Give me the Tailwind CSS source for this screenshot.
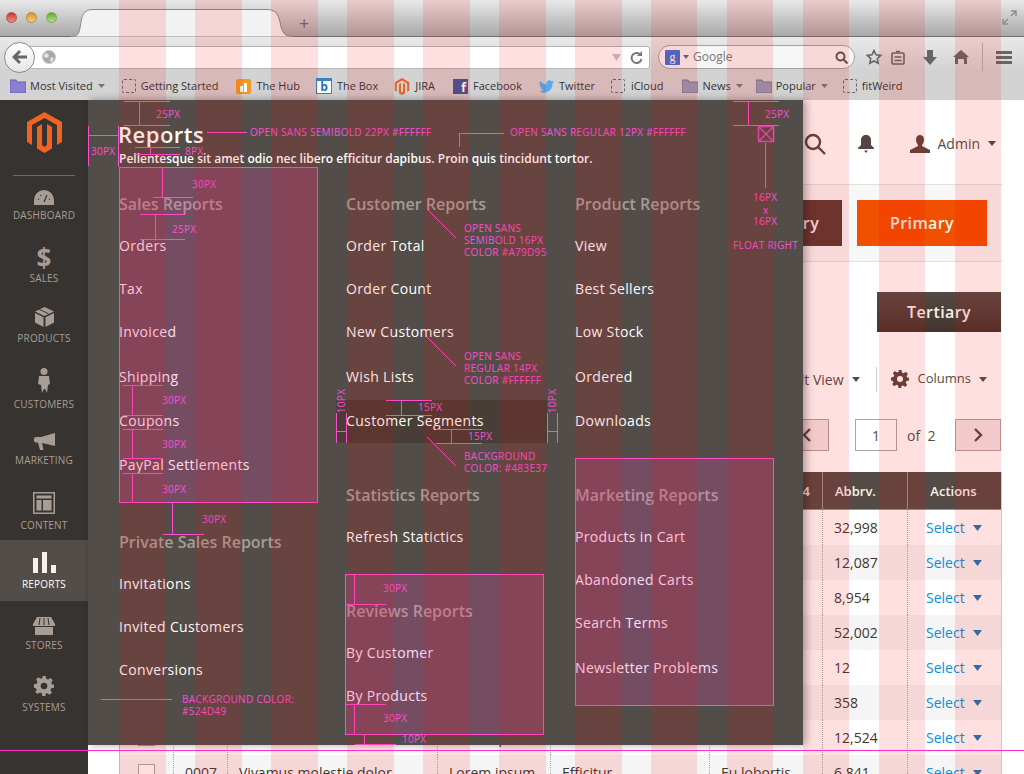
<!DOCTYPE html>
<html lang="en">
<head>
  <meta charset="UTF-8">
  <title>Reports menu spec</title>
  <script src="https://cdn.jsdelivr.net/npm/@tailwindcss/browser@4"></script>
</head>
<body class="relative w-[1024px] h-[774px] overflow-hidden bg-white font-['Open_Sans',sans-serif] text-[#41362f]">

  <!-- browser chrome -->
  <div class="h-[100px] flex flex-col">
    <div class="h-[37px] flex bg-linear-to-b from-[#e9e9e9] to-[#a9a9a9] border-b border-[#6f6f6f] pl-[6px]">
      <div class="flex gap-[9px] pt-[12px]">
        <span class="size-[11px] rounded-full bg-linear-to-b from-[#c9352f] to-[#f08a80] border border-[#a55]"></span>
        <span class="size-[11px] rounded-full bg-linear-to-b from-[#d8921f] to-[#f8d070] border border-[#a85]"></span>
        <span class="size-[11px] rounded-full bg-linear-to-b from-[#62a82f] to-[#b8e08a] border border-[#7a5]"></span>
      </div>
      <svg class="ml-[13px] mt-[8px]" width="224" height="29" viewBox="0 0 224 29"><path d="M0 28.5C9 28.5 9 26 11 14C12.500 5 15 1.500 24 1.500H196C205 1.500 208 5 210 14C212 26 215 28.500 224 28.500V29H0Z" fill="#f2f2f2" stroke="#8a8a8a"/></svg>
      <span class="ml-[5px] mt-[11px] text-[18px] leading-[24px] text-[#6a6a6a]">+</span>
      <svg class="ml-auto mr-[7px] mt-[10px]" width="15" height="15" viewBox="0 0 15 15" fill="none" stroke="#8f8f8f" stroke-width="1.500"><path d="M9 1h5v5M14 1L9 6M1 9v5h5M1 14l5-5"/></svg>
    </div>
    <div class="h-[35px] flex items-center bg-linear-to-b from-[#e9e9e9] to-[#d2d2d2] pl-[4px] pt-[5px]">
      <div class="z-10 size-[31px] rounded-full bg-linear-to-b from-white to-[#e6e6e6] border border-[#8a8a8a] flex items-center justify-center">
        <svg width="16" height="14" viewBox="0 0 16 14" fill="#666"><path d="M7 0L0 7l7 7 2-2-3.500-3.500H15V5.500H5.500L9 2z"/></svg>
      </div>
      <div class="-ml-[5px] w-[620px] h-[23px] bg-white border border-[#b5b5b5] rounded-r-[3px] flex items-center pl-[11px] pr-[5px]">
        <svg width="14" height="14" viewBox="0 0 14 14"><circle cx="7" cy="7" r="6.500" fill="#a8a8a8" stroke="#c9c9c9"/><path d="M3 3l3 1 1 2-2 2-3-1zM9 7l3 1-2 4-2-1z" fill="#e4e4e4"/></svg>
        <svg class="ml-auto" width="9" height="7" viewBox="0 0 9 7" fill="#c4c4c4"><path d="M0 0h9L4.500 7z"/></svg>
        <svg class="ml-[9px] mr-[1px]" width="13" height="13" viewBox="0 0 13 13" fill="none" stroke="#777" stroke-width="2"><path d="M11 4.500A5 5 0 1 0 11.500 8"/><path d="M12 0v5H7" fill="#777" stroke="none"/></svg>
      </div>
      <div class="ml-[8px] w-[197px] h-[24px] bg-[#f6f6f6] border border-[#a0a0a0] rounded-full flex items-center pl-[6px] pr-[6px]">
        <span class="w-[15px] h-[15px] bg-[#3f6fd8] rounded-[1px] text-white text-[12px] leading-[15px] text-center font-['Liberation_Serif',serif]">g</span>
        <svg class="ml-[3px]" width="6" height="4" viewBox="0 0 6 4" fill="#666"><path d="M0 0h6L3 4z"/></svg>
        <span class="ml-[4px] text-[12px] text-[#777]">Google</span>
        <svg class="ml-auto" width="13" height="13" viewBox="0 0 13 13" fill="none" stroke="#555" stroke-width="2"><circle cx="5.500" cy="5.500" r="4"/><path d="M8.500 8.500L12.500 12.500"/></svg>
      </div>
      <svg class="ml-[11px]" width="16" height="16" viewBox="0 0 16 16" fill="none" stroke="#666" stroke-width="1.600"><path d="M8 1.500l2 4.300 4.700.6-3.400 3.200.9 4.700L8 12l-4.200 2.300.9-4.700L1.300 6.400 6 5.800z"/></svg>
      <svg class="ml-[9px]" width="14" height="15" viewBox="0 0 14 15" fill="none" stroke="#666" stroke-width="1.600"><rect x="1" y="3" width="12" height="11" rx="1"/><path d="M5 1.500h4M3.500 7h7M3.500 10.500h7"/></svg>
      <svg class="ml-[18px]" width="14" height="15" viewBox="0 0 14 15" fill="#666"><path d="M4 0h6v7h4l-7 8-7-8h4z"/></svg>
      <svg class="ml-[16px]" width="16" height="14" viewBox="0 0 16 14" fill="#666"><path d="M8 0l8 7h-2v7h-3V9H5v5H2V7H0z"/></svg>
      <span class="ml-[13px] w-px h-[28px] bg-[#b0b0b0]"></span>
      <span class="ml-[13px] w-[16px] flex flex-col gap-[2px]"><i class="h-[3px] bg-[#666]"></i><i class="h-[3px] bg-[#666]"></i><i class="h-[3px] bg-[#666]"></i></span>
    </div>
    <div class="flex-1 flex items-center bg-[#d3d3d3] pl-[10px] text-[11px] text-[#333]">
      <svg width="16" height="14" viewBox="0 0 16 14"><path d="M0 1h6l1 2h9v11H0z" fill="#8a7ed0" stroke="#6a5eb0"/></svg>
      <span class="ml-[4px]">Most Visited</span>
      <svg class="ml-[5px]" width="7" height="4" viewBox="0 0 7 4" fill="#777"><path d="M0 0h7L3.500 4z"/></svg>
      <span class="ml-[17px] size-[14px] rounded-[2px] border border-dashed border-[#666]"></span>
      <span class="ml-[5px]">Getting Started</span>
      <span class="ml-[18px] size-[15px] rounded-[2px] bg-[#f29a1f] flex items-end justify-center gap-px pb-[2px]"><i class="w-[3px] h-[6px] bg-white"></i><i class="w-[3px] h-[9px] bg-white"></i></span>
      <span class="ml-[5px]">The Hub</span>
      <span class="ml-[16px] w-[16px] h-[16px] bg-white border border-[#3b7fc4] border-t-[3px] text-[#1e6fb8] text-[12px] leading-[12px] font-bold text-center">b</span>
      <span class="ml-[5px]">The Box</span>
      <svg class="ml-[16px]" width="16" height="17" viewBox="0 0 35 41" fill="#e8622a"><path d="M17.500 0L35 10V30L30 33V13L17.500 6 5 13V33L0 30V10z"/><path d="M10 15L15 12V33L17.500 35 20 33V12L25 15V36.500L17.500 41 10 36.500z"/></svg>
      <span class="ml-[5px]">JIRA</span>
      <span class="ml-[18px] size-[15px] bg-[#3b5998] text-white text-[13px] leading-[16px] font-bold text-right pr-[2px]">f</span>
      <span class="ml-[5px]">Facebook</span>
      <svg class="ml-[17px]" width="15" height="13" viewBox="0 0 16 13" fill="#55acee"><path d="M16 1.500c-.6.300-1.200.4-1.900.5.700-.4 1.200-1 1.400-1.800-.6.400-1.300.7-2.100.8A3.300 3.300 0 0 0 7.800 4C5.100 3.900 2.700 2.600 1.100.6.200 2.100.700 4 2.100 4.900c-.5 0-1-.2-1.500-.4 0 1.600 1.100 2.900 2.600 3.200-.5.100-1 .2-1.500.1.400 1.300 1.600 2.200 3.100 2.300A6.600 6.600 0 0 1 0 11.500 9.300 9.300 0 0 0 14.400 3.300c.6-.5 1.200-1.100 1.600-1.800z"/></svg>
      <span class="ml-[5px]">Twitter</span>
      <span class="ml-[16px] size-[14px] rounded-[2px] border border-dashed border-[#666]"></span>
      <span class="ml-[6px]">iCloud</span>
      <svg class="ml-[19px]" width="16" height="14" viewBox="0 0 16 14"><path d="M0 1h6l1 2h9v11H0z" fill="#8f9db8" stroke="#6a7890"/></svg>
      <span class="ml-[4px]">News</span>
      <svg class="ml-[5px]" width="7" height="4" viewBox="0 0 7 4" fill="#777"><path d="M0 0h7L3.500 4z"/></svg>
      <svg class="ml-[13px]" width="16" height="14" viewBox="0 0 16 14"><path d="M0 1h6l1 2h9v11H0z" fill="#8f9db8" stroke="#6a7890"/></svg>
      <span class="ml-[4px]">Popular</span>
      <svg class="ml-[5px]" width="7" height="4" viewBox="0 0 7 4" fill="#777"><path d="M0 0h7L3.500 4z"/></svg>
      <span class="ml-[15px] size-[14px] rounded-[2px] border border-dashed border-[#666]"></span>
      <span class="ml-[5px]">fitWeird</span>
    </div>
  </div>

  <div class="flex h-[674px]">
    <!-- sidebar -->
    <nav class="w-[88px] shrink-0 bg-[#373330] text-[#a79d95] text-[10px] leading-[14px] tracking-[0.2px] flex flex-col">
      <div class="h-[75px] border-b-0 relative flex justify-center pt-[12px]">
        <svg width="35" height="41" viewBox="0 0 35 41" fill="#f26322"><path d="M17.500 0L35 10V30L30 33V13L17.500 6 5 13V33L0 30V10z"/><path d="M10 15L15 12V33L17.500 35 20 33V12L25 15V36.500L17.500 41 10 36.500z"/></svg>
      </div>
      <div class="mx-[13px] h-px bg-[#6f6962]"></div>
      <a class="h-[56px] flex flex-col items-center justify-end gap-[3px] pb-[10px]">
        <svg width="20" height="15" viewBox="0 0 20 15"><path d="M0 15V10a10 10 0 0 1 20 0v5z" fill="#a79d95"/><path d="M10 12l3-7M4 9l1 .5M6.500 5l.5 1M16 9l-1 .5" stroke="#373330" stroke-width="1.200"/></svg>
        <span>DASHBOARD</span>
      </a>
      <a class="h-[63px] flex flex-col items-center justify-end gap-[2px] pb-[10px]">
        <span class="text-[26px] leading-[21px] font-bold">$</span>
        <span>SALES</span>
      </a>
      <a class="h-[60px] flex flex-col items-center justify-end gap-[4px] pb-[10px]">
        <svg width="19" height="20" viewBox="0 0 19 20" fill="#a79d95"><path d="M9.500 0L19 4.500 9.500 9 0 4.500z"/><path d="M0 6l8.500 4.200V20L0 15.500zM19 6l-8.500 4.200V20l8.500-4.500z"/><path d="M4 2.200l9.500 4.500" stroke="#373330"/></svg>
        <span>PRODUCTS</span>
      </a>
      <a class="h-[66px] flex flex-col items-center justify-end gap-[4px] pb-[10px]">
        <svg width="12" height="25" viewBox="0 0 12 25" fill="#a79d95"><circle cx="6" cy="3.500" r="3.500"/><path d="M1 8h10l1 8-2 1-1 8-2-4-1 0-2 4-1-8-3-1z"/></svg>
        <span>CUSTOMERS</span>
      </a>
      <a class="h-[56px] flex flex-col items-center justify-end gap-[3px] pb-[10px]">
        <svg width="21" height="17" viewBox="0 0 21 17" fill="#a79d95"><path d="M21 0v13L8 10l1.500 7H6L4 9.500H2a2 2 0 0 1-2-2V6a2 2 0 0 1 2-2h5z"/></svg>
        <span>MARKETING</span>
      </a>
      <a class="h-[63px] flex flex-col items-center justify-end gap-[4px] pb-[8px]">
        <svg width="22" height="22" viewBox="0 0 22 22" fill="#a79d95"><path fill-rule="evenodd" d="M0 0h22v22H0zM1.500 1.500v19h19v-19z"/><path d="M3.500 3.500h15v3h-15zM3.500 8h5v10.500h-5zM10 8h8.500v10.500H10z"/></svg>
        <span>CONTENT</span>
      </a>
      <a class="h-[61px] bg-[#524d49] text-white flex flex-col items-center justify-end gap-[4px] pb-[10px]">
        <span class="flex items-end gap-[4px] h-[21px]"><i class="w-[5px] h-[15px] bg-[#f5f1ea]"></i><i class="w-[5px] h-[21px] bg-[#f5f1ea]"></i><i class="w-[5px] h-[8px] bg-[#f5f1ea]"></i></span>
        <span>REPORTS</span>
      </a>
      <a class="h-[61px] flex flex-col items-center justify-end gap-[3px] pb-[10px]">
        <svg width="22" height="18" viewBox="0 0 22 18" fill="#a79d95"><path d="M4 0h14l4 7v2H0V7zM2 10h18v8H2z"/><path d="M7 1L6 8M11 1v7M15 1l1 7" stroke="#373330"/></svg>
        <span>STORES</span>
      </a>
      <a class="h-[62px] flex flex-col items-center justify-end gap-[4px] pb-[10px]">
        <svg width="20" height="20" viewBox="0 0 24 24" fill="#a79d95"><path fill-rule="evenodd" d="M10 0h4l.6 3.300 2.400 1 2.800-1.900 2.800 2.800L20.700 8l1 2.400L24 10v4l-3.300.6-1 2.400 1.900 2.800-2.800 2.800-2.800-1.900-2.400 1L14 24h-4l-.6-3.300-2.400-1-2.800 1.900-2.800-2.800L3.300 17l-1-2.400L0 14v-4l3.300-.6 1-2.400L2.400 4.200l2.800-2.800L8 3.300l2.400-1zM12 8a4 4 0 1 0 0 8 4 4 0 0 0 0-8z"/></svg>
        <span>SYSTEMS</span>
      </a>
    </nav>

    <!-- page under the flyout -->
    <main class="w-[914px] shrink-0 flex flex-col">
      <header class="h-[85px] shrink-0 border-b border-[#e6dedb] flex items-center justify-end pt-[3px] pr-[6px] text-[14px] text-[#524d49]">
        <svg width="22" height="22" viewBox="0 0 22 22" fill="none" stroke="#5a4640" stroke-width="2.400"><circle cx="9" cy="9" r="7"/><path d="M14 14l7 7"/></svg>
        <svg class="ml-[32px]" width="16" height="18" viewBox="0 0 16 18" fill="#524642"><path d="M8 0c3 0 5 2 5 5v5l3 3v1H0v-1l3-3V5c0-3 2-5 5-5zM6 15.500h4L8 18z"/></svg>
        <svg class="ml-[36px]" width="20" height="18" viewBox="0 0 20 18" fill="#5a4640"><path d="M10 0c2.500 0 4 2 4 4.500S13 9 12 10v1l8 4v3H0v-3l8-4v-1C7 9 6 7 6 4.500S7.500 0 10 0z"/></svg>
        <span class="ml-[8px]">Admin</span>
        <svg class="ml-[8px]" width="8" height="5" viewBox="0 0 8 5" fill="#5a4640"><path d="M0 0h8L4 5z"/></svg>
      </header>
      <div class="h-[77px] shrink-0 bg-[#f7f7f7] border-b border-[#e6dedb] flex items-center justify-end gap-[15px] pr-[15px] text-[16px] font-semibold tracking-[0.4px] text-[#f5f1ea]">
        <button class="h-[46px] w-[130px] bg-[#5a3a33]">Secondary</button>
        <button class="h-[46px] w-[130px] bg-[#f05000]">Primary</button>
      </div>
      <div class="h-[210px] shrink-0 flex flex-col items-end pr-[1px]">
        <button class="mt-[30px] w-[124px] h-[40px] bg-linear-to-b from-[#534b47] to-[#43352d] text-[16px] font-semibold tracking-[0.4px] text-[#f5f1ea]">Tertiary</button>
        <div class="mt-[34px] h-[26px] flex items-center text-[#524d49] pr-[14px]">
          <span class="text-[14px]">Default View</span>
          <svg class="ml-[8px]" width="8" height="5" viewBox="0 0 8 5" fill="#524d49"><path d="M0 0h8L4 5z"/></svg>
          <span class="ml-[16px] w-px h-[25px] bg-[#ccc]"></span>
          <svg class="ml-[14px]" width="18" height="18" viewBox="0 0 24 24" fill="#5a4640"><path fill-rule="evenodd" d="M10 0h4l.6 3.300 2.400 1 2.800-1.900 2.800 2.800L20.700 8l1 2.400L24 10v4l-3.300.6-1 2.400 1.900 2.800-2.800 2.800-2.800-1.900-2.400 1L14 24h-4l-.6-3.300-2.400-1-2.800 1.900-2.800-2.800L3.300 17l-1-2.400L0 14v-4l3.300-.6 1-2.400L2.400 4.200l2.800-2.800L8 3.300l2.400-1zM12 8a4 4 0 1 0 0 8 4 4 0 0 0 0-8z"/></svg>
          <span class="ml-[9px] text-[13px]">Columns</span>
          <svg class="ml-[8px]" width="8" height="5" viewBox="0 0 8 5" fill="#524d49"><path d="M0 0h8L4 5z"/></svg>
        </div>
        <div class="mt-[27px] h-[32px] flex items-center text-[14px] text-[#524d49]">
          <button class="w-[46px] h-[32px] bg-[#f0e6e6] border border-[#b0a09c] flex items-center justify-center"><svg width="9" height="14" viewBox="0 0 9 14" fill="none" stroke="#5a4640" stroke-width="2.400"><path d="M8 1L2 7l6 6"/></svg></button>
          <input value="1" class="ml-[26px] w-[42px] h-[32px] bg-white border border-[#ada5a0] text-center text-[14px]">
          <span class="ml-[10px] w-[48px]">of&nbsp; 2</span>
          <button class="w-[46px] h-[32px] bg-[#f0e6e6] border border-[#b0a09c] flex items-center justify-center"><svg width="9" height="14" viewBox="0 0 9 14" fill="none" stroke="#5a4640" stroke-width="2.400"><path d="M1 1l6 6-6 6"/></svg></button>
        </div>
      </div>
      <div class="ml-[31px] w-[883px] border-x border-[#cfc8c4]">
        <div class="grid grid-cols-[53px_54px_210px_113px_159px_113px_85px_1fr] h-[38px] bg-[#544b46] text-[#f5f1ea] text-[13px] font-semibold leading-[38px] border-b border-[#a08f85]">
          <span></span><span></span><span></span><span></span><span></span>
          <span class="text-right pr-[12px]">Header 4</span>
          <span class="border-l border-[#a08f85] pl-[12px]">Abbrv.</span>
          <span class="border-l border-[#a08f85] text-center pr-[2px]">Actions</span>
        </div>
        <div id="rows"></div>
      </div>
    </main>
  </div>

  <!-- reports flyout -->
  <section class="absolute z-10 left-[88px] top-[100px] w-[715px] h-[645px] bg-[#524d49] shadow-[3px_0_8px_rgba(0,0,0,0.35)] pl-[31px] pt-[19px] text-white">
    <h1 class="text-[22px] leading-[30px] font-semibold tracking-[0.5px] -ml-[1px]">Reports</h1>
    <p class="mt-[2px] text-[12px] leading-[16px] font-semibold">Pellentesque sit amet odio nec libero efficitur dapibus. Proin quis tincidunt tortor.</p>
    <div class="mt-[26px] grid grid-cols-[227px_229px_228px] text-[14px] leading-[20px] tracking-[0.35px]">
      <div class="flex flex-col items-start">
        <h2 class="text-[16px] leading-[22px] font-semibold tracking-normal text-[#a79d95]">Sales Reports</h2>
        <a class="mt-[21px]">Orders</a>
        <a class="mt-[23px]">Tax</a>
        <a class="mt-[23px]">Invoiced</a>
        <a class="mt-[25px]">Shipping</a>
        <a class="mt-[24px]">Coupons</a>
        <a class="mt-[24px]">PayPal Settlements</a>
        <h2 class="mt-[56px] text-[16px] leading-[22px] font-semibold tracking-normal text-[#a79d95]">Private Sales Reports</h2>
        <a class="mt-[21px]">Invitations</a>
        <a class="mt-[23px]">Invited Customers</a>
        <a class="mt-[23px]">Conversions</a>
      </div>
      <div class="flex flex-col items-start">
        <h2 class="text-[16px] leading-[22px] font-semibold tracking-normal text-[#a79d95]">Customer Reports</h2>
        <a class="mt-[21px]">Order Total</a>
        <a class="mt-[23px]">Order Count</a>
        <a class="mt-[23px]">New Customers</a>
        <a class="mt-[25px]">Wish Lists</a>
        <a class="mt-[13px] -ml-[10px] w-[211px] pl-[10px] pt-[11px] pb-[12px] bg-[#483e37]">Customer Segments</a>
        <h2 class="mt-[41px] text-[16px] leading-[22px] font-semibold tracking-normal text-[#a79d95]">Statistics Reports</h2>
        <a class="mt-[21px]">Refresh Statictics</a>
        <h2 class="mt-[53px] text-[16px] leading-[22px] font-semibold tracking-normal text-[#a79d95]">Reviews Reports</h2>
        <a class="mt-[21px]">By Customer</a>
        <a class="mt-[23px]">By Products</a>
      </div>
      <div class="flex flex-col items-start">
        <h2 class="text-[16px] leading-[22px] font-semibold tracking-normal text-[#a79d95]">Product Reports</h2>
        <a class="mt-[21px]">View</a>
        <a class="mt-[23px]">Best Sellers</a>
        <a class="mt-[23px]">Low Stock</a>
        <a class="mt-[25px]">Ordered</a>
        <a class="mt-[24px]">Downloads</a>
        <h2 class="mt-[53px] text-[16px] leading-[22px] font-semibold tracking-normal text-[#a79d95]">Marketing Reports</h2>
        <a class="mt-[21px]">Products in Cart</a>
        <a class="mt-[23px]">Abandoned Carts</a>
        <a class="mt-[23px]">Search Terms</a>
        <a class="mt-[25px]">Newsletter Problems</a>
      </div>
    </div>
  </section>

  <!-- spec annotations: measured boxes, lines, labels -->
  <div id="spec" class="absolute z-20 inset-0 pointer-events-none text-[10px] leading-[12px] font-medium tracking-[0.3px] text-[#ff4dd2]">
    <svg class="absolute inset-0" width="1024" height="774" fill="none" stroke="#ff4dd2">
      <path d="M427 209L456 238M427 337L456 366M427 437L456 466"/>
      <path d="M758.500 126.500h15v15h-15zM758.500 126.500l15 15M773.500 126.500l-15 15" stroke-width="1.500" stroke-opacity=".8"/>
    </svg>
  </div>

  <!-- 12 column grid overlay -->
  <div class="absolute z-30 inset-y-0 left-[119px] flex gap-[29.4px] pointer-events-none">
    <i class="w-[46.6px] bg-[#ff0000]/12"></i><i class="w-[46.6px] bg-[#ff0000]/12"></i><i class="w-[46.6px] bg-[#ff0000]/12"></i><i class="w-[46.6px] bg-[#ff0000]/12"></i>
    <i class="w-[46.6px] bg-[#ff0000]/12"></i><i class="w-[46.6px] bg-[#ff0000]/12"></i><i class="w-[46.6px] bg-[#ff0000]/12"></i><i class="w-[46.6px] bg-[#ff0000]/12"></i>
    <i class="w-[46.6px] bg-[#ff0000]/12"></i><i class="w-[46.6px] bg-[#ff0000]/12"></i><i class="w-[46.6px] bg-[#ff0000]/12"></i><i class="w-[46.6px] bg-[#ff0000]/12"></i>
  </div>
  <div class="absolute z-30 left-0 right-0 top-[750px] h-px bg-[#ff2ed0]"></div>

  <script>
    //table rows, [id, abbrv]
    const rows = [['0001','32,998'],['0002','12,087'],['0003','8,954'],['0004','52,002'],['0005','12'],['0006','358'],['0006','12,524'],['0007','6,841']]
    document.querySelector('#rows').innerHTML = rows.map((r, i) => `
      <div class="grid grid-cols-[53px_54px_210px_113px_159px_113px_85px_1fr] h-[35px] items-stretch text-[14px] leading-[35px] ${i % 2 ? 'bg-[#f5f5f5]' : 'bg-white'}">
        <span class="flex items-center justify-center"><i class="size-[17px] bg-white border border-[#ada5a0]"></i></span>
        <span class="border-l border-dotted border-[#aaa] pl-[11px]">${r[0]}</span>
        <span class="border-l border-dotted border-[#aaa] pl-[11px]">Vivamus molestie dolor</span>
        <span class="border-l border-dotted border-[#aaa] pl-[11px]">Lorem ipsum</span>
        <span class="border-l border-dotted border-[#aaa] pl-[11px]">Efficitur</span>
        <span class="border-l border-dotted border-[#aaa] pl-[11px]">Eu lobortis</span>
        <span class="border-l border-dotted border-[#aaa] pl-[11px]">${r[1]}</span>
        <span class="border-l border-dotted border-[#aaa] pl-[18px] text-[#0a8fdc] flex items-center gap-[8px]">Select<svg width="9" height="6" viewBox="0 0 9 6" fill="#1a79b5"><path d="M0 0h9L4.500 6z"/></svg></span>
      </div>`).join('')

    //measured boxes [x, y, w, h]
    const boxes = [[119,167,199,336],[345,574,199,161],[575,458,199,248]]
    //guide lines [x, y, w, h]
    const lines = [
      [124,101,46,1],[139,101,1,24],[124,125,46,1],
      [88,126,1,40],[88,135,30,1],[118,126,1,41],
      [207,132,40,1],[135,147,45,1],[135,154,45,1],[150,147,1,7],
      [162,168,1,29],[153,197,40,1],[140,214,45,1],[155,214,1,25],[140,239,45,1],
      [123,385,40,1],[132,385,1,30],[123,415,40,1],[123,429,40,1],[132,429,1,29],[123,458,40,1],
      [123,473,40,1],[132,473,1,30],[172,503,1,31],[163,534,41,1],[101,699,71,1],
      [459,133,1,14],[459,133,45,1],
      [386,400,46,1],[401,400,1,15],[386,415,46,1],[436,429,46,1],[451,429,1,14],[436,443,46,1],
      [336,413,1,30],[346,413,1,30],[336,431,10,1],[547,413,1,30],[557,413,1,30],[547,431,10,1],
      [354,574,1,30],[346,604,40,1],[346,704,40,1],[354,704,1,30],[364,735,1,9],[355,744,41,1],
      [733,101,46,1],[748,101,1,24],[733,125,46,1],[765,143,1,45]
    ]
    //labels [x, centre y, text]
    const labels = [
      [156,114,'25PX'],[91,151,'30PX'],[250,132,'OPEN SANS SEMIBOLD 22PX #FFFFFF'],[185,151,'8PX'],
      [510,132,'OPEN SANS REGULAR 12PX #FFFFFF'],[192,184,'30PX'],[172,229,'25PX'],
      [162,400,'30PX'],[162,444,'30PX'],[162,489,'30PX'],[202,519,'30PX'],
      [182,699,'BACKGROUND COLOR:'],[182,711,'#524D49'],
      [464,228,'OPEN SANS'],[464,240,'SEMIBOLD 16PX'],[464,252,'COLOR #A79D95'],
      [464,356,'OPEN SANS'],[464,368,'REGULAR 14PX'],[464,380,'COLOR #FFFFFF'],
      [464,456,'BACKGROUND'],[464,468,'COLOR: #483E37'],
      [418,407,'15PX'],[468,436,'15PX'],
      [383,588,'30PX'],[383,718,'30PX'],[402,739,'10PX'],[765,114,'25PX'],
      [753,197,'16PX'],[763,210,'x'],[753,221,'16PX'],[733,245,'FLOAT RIGHT']
    ]
    const spec = document.querySelector('#spec')
    boxes.forEach(b => spec.insertAdjacentHTML('beforeend', `<div class="absolute bg-[#ff50cc]/20 border border-[#ff4dd2]" style="left:${b[0]}px;top:${b[1]}px;width:${b[2]}px;height:${b[3]}px"></div>`))
    lines.forEach(l => spec.insertAdjacentHTML('beforeend', `<div class="absolute bg-[#ff4dd2]" style="left:${l[0]}px;top:${l[1]}px;width:${l[2]}px;height:${l[3]}px"></div>`))
    labels.forEach(t => spec.insertAdjacentHTML('beforeend', `<span class="absolute whitespace-nowrap" style="left:${t[0]}px;top:${t[1] - 6}px">${t[2]}</span>`))
    ;[[341,401],[552,401]].forEach(p => spec.insertAdjacentHTML('beforeend', `<span class="absolute whitespace-nowrap -rotate-90 -translate-x-1/2 -translate-y-1/2" style="left:${p[0]}px;top:${p[1]}px">10PX</span>`))
  </script>
</body>
</html>
